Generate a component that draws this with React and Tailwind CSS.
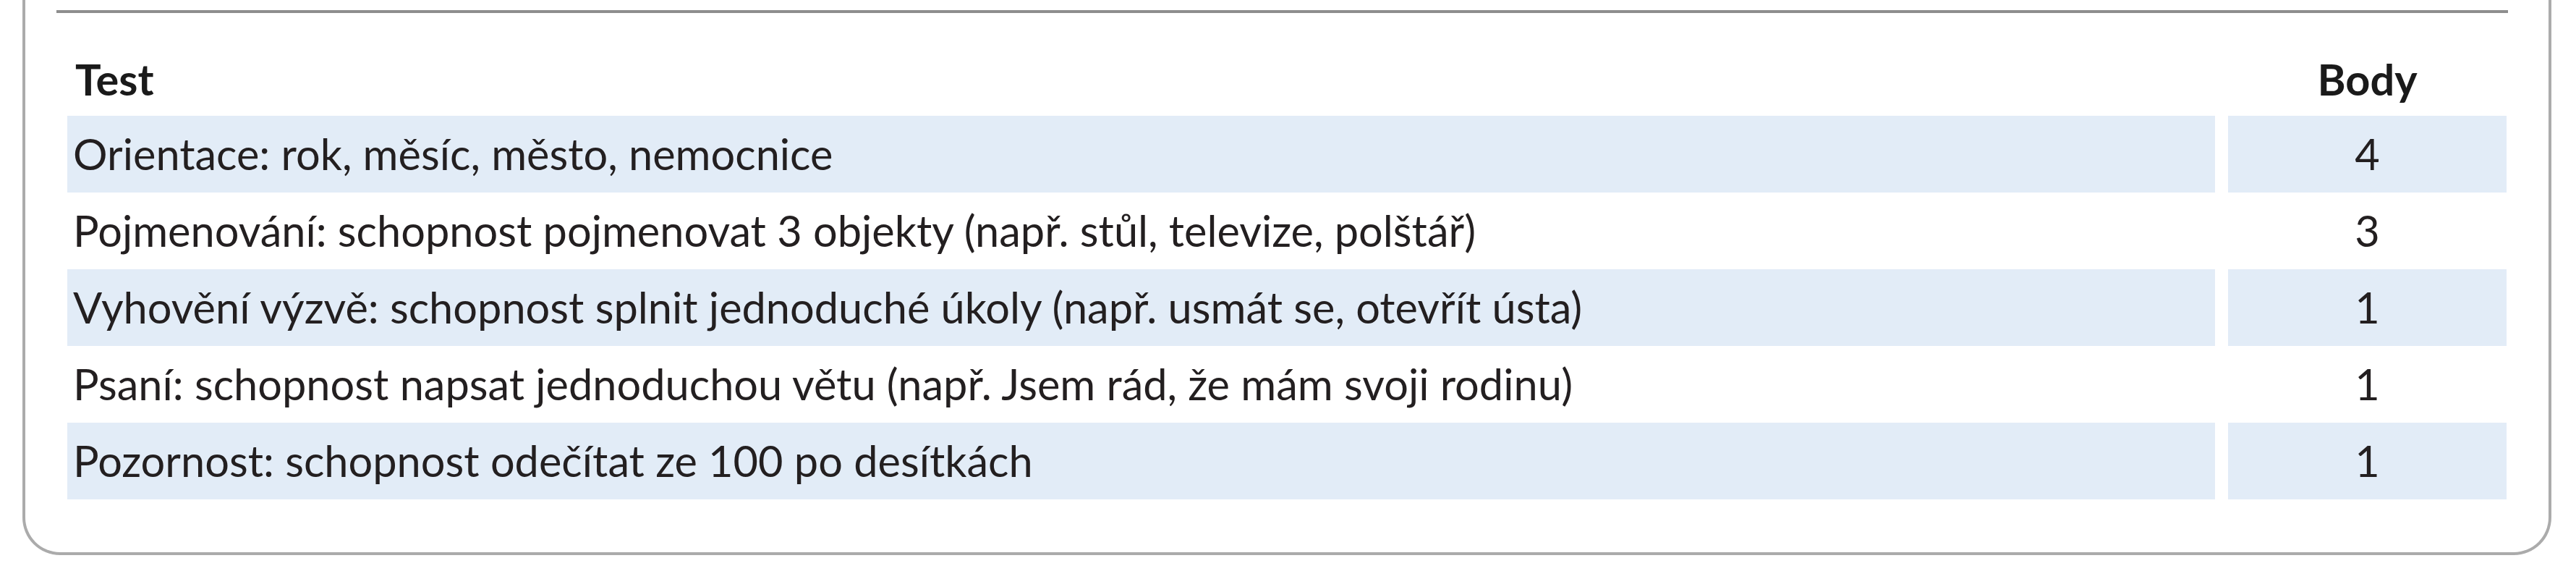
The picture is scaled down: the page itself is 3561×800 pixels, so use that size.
const rows = [
  ["Orientace: rok, měsíc, město, nemocnice", "4"],
  ["Pojmenování: schopnost pojmenovat 3 objekty (např. stůl, televize, polštář)", "3"],
  ["Vyhovění výzvě: schopnost splnit jednoduché úkoly (např. usmát se, otevřít ústa)", "1"],
  ["Psaní: schopnost napsat jednoduchou větu (např. Jsem rád, že mám svoji rodinu)", "1"],
  ["Pozornost: schopnost odečítat ze 100 po desítkách", "1"],
];

export default function App() {
  return (
    <div className="bg-white h-[800px] w-[3561px] font-['Lato',sans-serif]">
      <div className="ml-[31px] w-[3496px] h-[767px] border-[4px] border-t-0 border-[#ababab] rounded-b-[52px] bg-white pt-[14px]">
        <div className="ml-[43px] mr-[56px] h-[4px] bg-[#8e8e8e]" />
        <div className="px-[58px]">
          <div className="flex h-[142px] items-end pb-[21px] text-[59.5px] leading-none font-bold text-[#1a1a1a]">
            <div className="w-[2969px] pl-[11px]">Test</div>
            <div className="w-[18px]" />
            <div className="w-[385px] text-center">Body</div>
          </div>
          {rows.map(([label, pts], i) => (
            <div key={i} className="flex h-[106px] text-[59.5px] leading-none text-[#231f20]">
              <div className={`w-[2969px] pl-[8px] flex items-center ${i % 2 === 0 ? "bg-[#e2ecf7]" : "bg-white"}`}>
                {label}
              </div>
              <div className="w-[18px] bg-white" />
              <div className={`w-[385px] flex items-center justify-center ${i % 2 === 0 ? "bg-[#e2ecf7]" : "bg-white"}`}>
                {pts}
              </div>
            </div>
          ))}
        </div>
      </div>
    </div>
  );
}
